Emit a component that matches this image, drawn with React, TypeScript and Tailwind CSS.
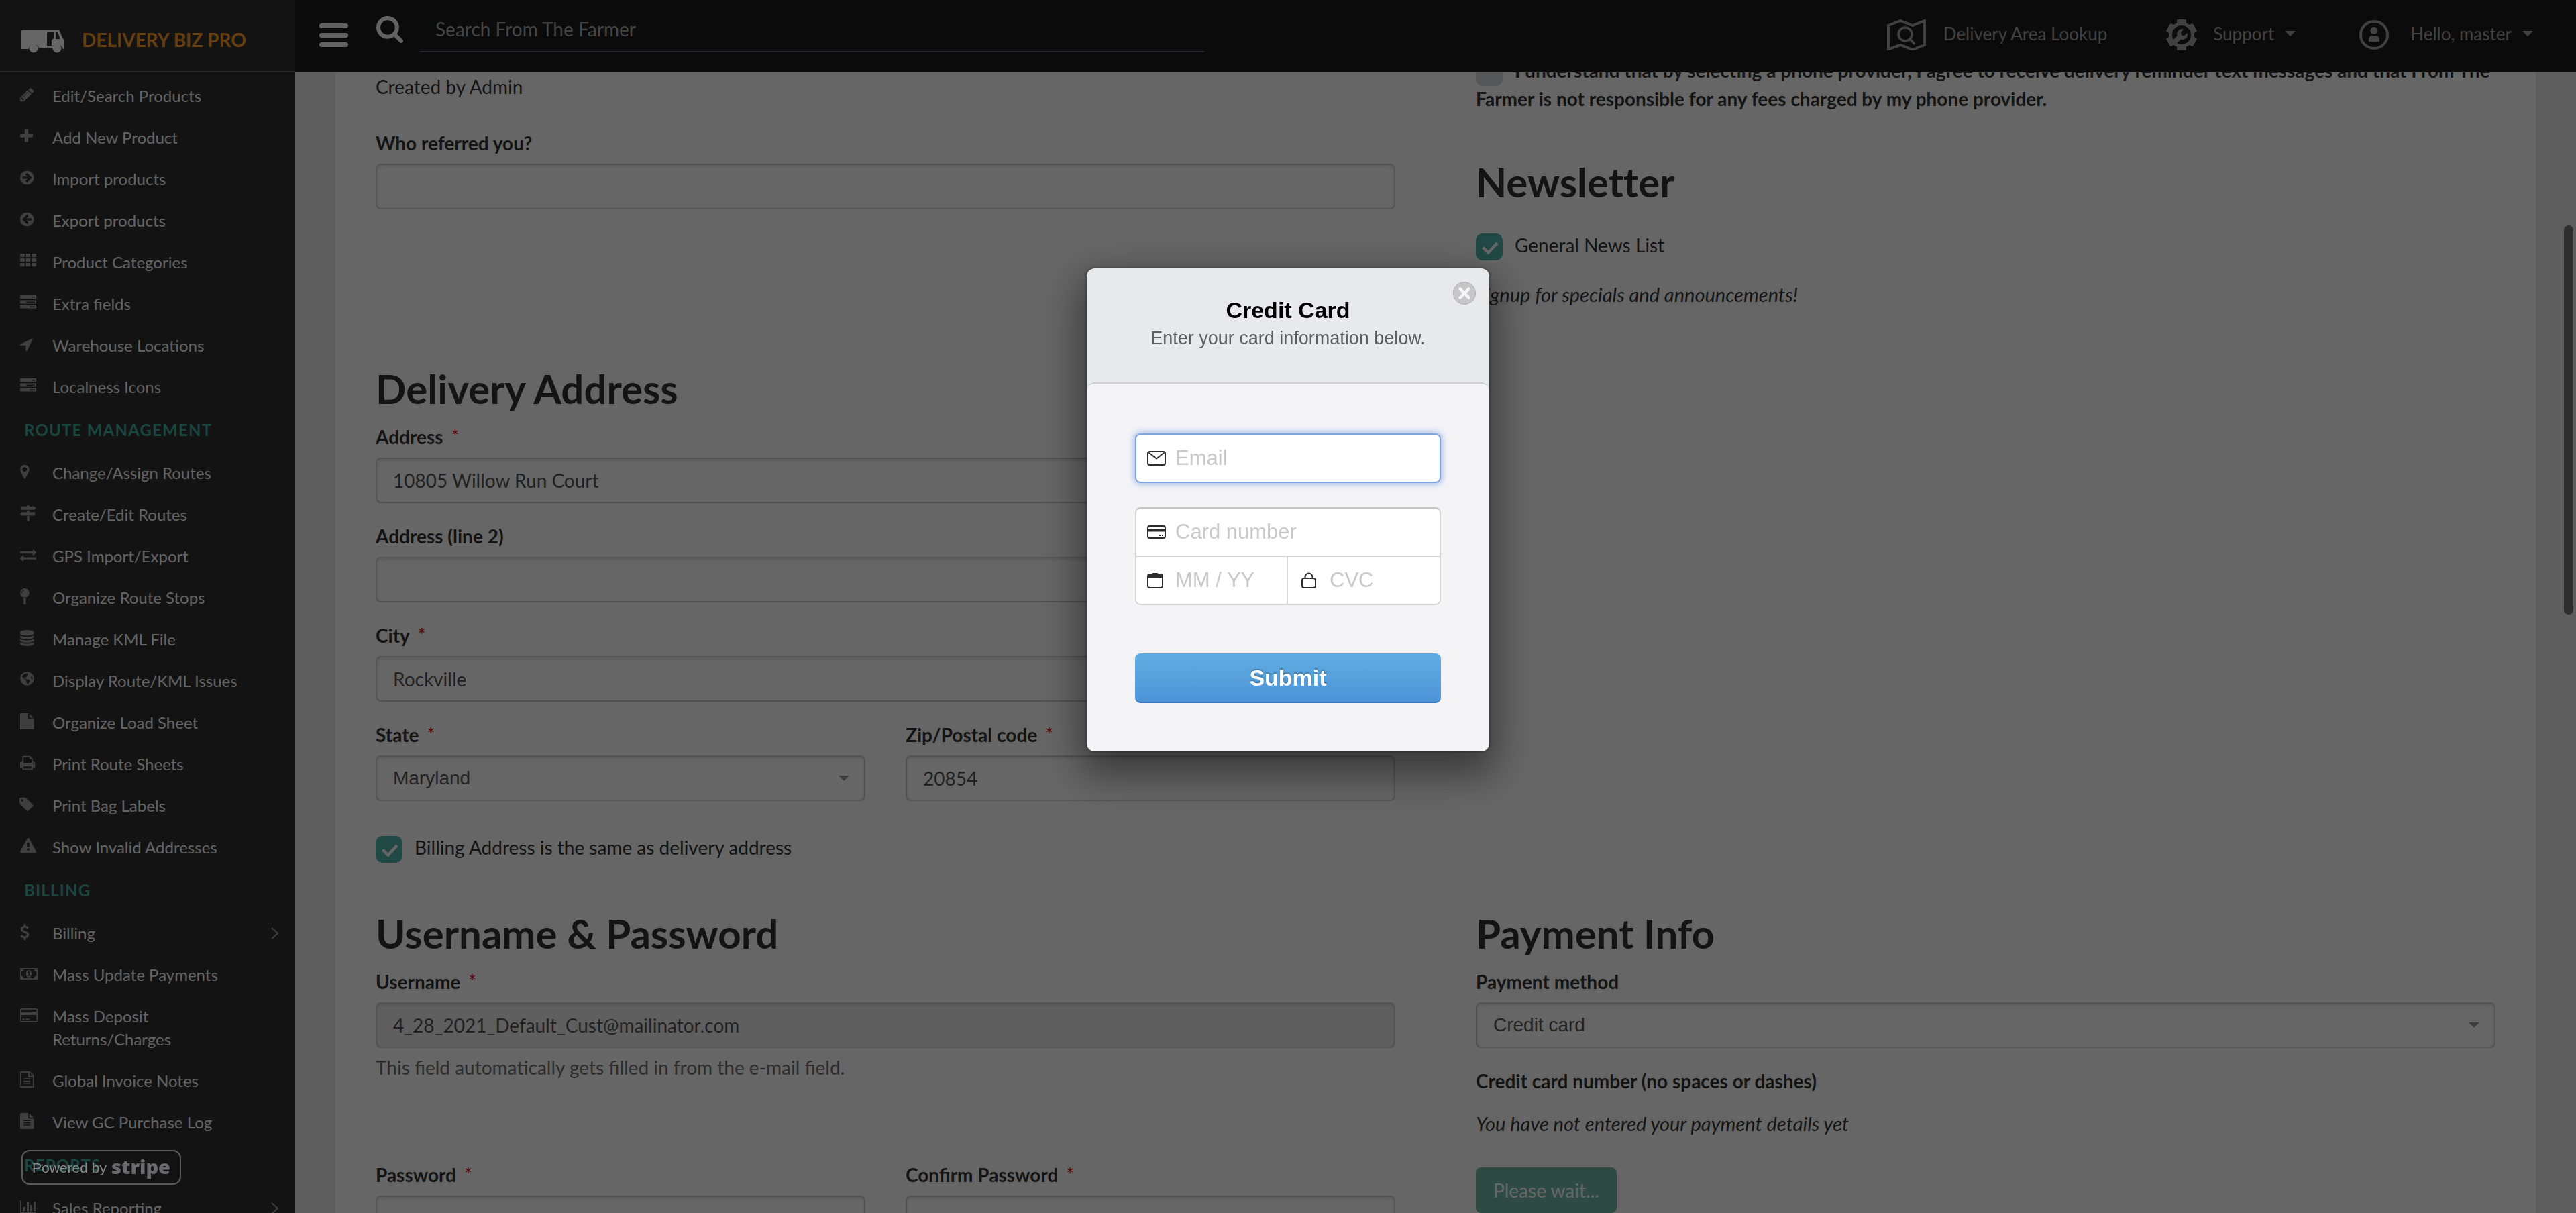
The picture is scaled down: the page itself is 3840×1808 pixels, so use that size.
import React from "react";
import { FaGlobeAmericas } from "react-icons/fa";

/* ---------- icons ---------- */

type GlyphProps = { d: string; x?: number };

function Glyph({ d, x = 0 }: GlyphProps) {
  return (
    <svg viewBox={`${x} 0 1792 1792`} className="size-6 overflow-visible" fill="currentColor" aria-hidden="true">
      <path fillRule="evenodd" d={d} />
    </svg>
  );
}

const arrowCircle =
  "M1413 896q0-27-18-45l-91-91-362-362q-18-18-45-18t-45 18l-91 91q-18 18-18 45t18 45l189 189h-502q-26 0-45 19t-19 45v128q0 26 19 45t45 19h502l-189 189q-19 19-19 45t19 45l91 91q18 18 45 18t45-18l362-362 91-91q18-18 18-45zm251 0q0 209-103 385.5t-279.5 279.5-385.5 103-385.5-103-279.5-279.5-103-385.5 103-385.5 279.5-279.5 385.5-103 385.5 103 279.5 279.5 103 385.5z";

const searchPath =
  "M1216 832q0-185-131.5-316.5t-316.5-131.5-316.5 131.5-131.5 316.5 131.5 316.5 316.5 131.5 316.5-131.5 131.5-316.5zm512 832q0 52-38 90t-90 38q-54 0-90-38l-343-342q-179 124-399 124-143 0-273.5-55.5t-225-150-150-225-55.5-273.5 55.5-273.5 150-225 225-150 273.5-55.5 273.5 55.5 225 150 150 225 55.5 273.5q0 220-124 399l343 343q37 37 37 90z";

function ServerIcon() {
  return (
    <svg viewBox="0 0 24 24" className="size-6" fill="currentColor" aria-hidden="true">
      <path
        fillRule="evenodd"
        d="M0 1h24v5H0zM18 3v1.5h4V3zM0 8.500h24v5H0zM9 10.500V12h13v-1.500zM0 15.500h24v5H0zM14 17.500V19h8v-1.500z"
      />
    </svg>
  );
}

function GridIcon() {
  const cells = [0, 8.6, 17.2];
  return (
    <svg viewBox="0 0 24 24" className="size-6" fill="currentColor" aria-hidden="true">
      {cells.map((x) =>
        [1, 8, 15].map((y) => <rect key={`${x}-${y}`} x={x} y={y} width="6.8" height="5.200" rx="1.200" />),
      )}
    </svg>
  );
}

function MoneyIcon() {
  return (
    <svg viewBox="0 0 26 24" className="h-6 w-[26px]" fill="currentColor" aria-hidden="true">
      <path
        fillRule="evenodd"
        d="M0 4h26v17H0zM5.200 5.700A3.500 3.500 0 0 1 1.700 9.200v6.600a3.500 3.500 0 0 1 3.500 3.500h15.600a3.500 3.500 0 0 1 3.500-3.500V9.200a3.500 3.500 0 0 1-3.500-3.500zM13 7.200c2.500 0 4.100 2.200 4.100 5.300s-1.600 5.300-4.100 5.300-4.100-2.200-4.100-5.300S10.500 7.200 13 7.200zM12.600 9l-2 1.700.8 1 1-.8v3.500h-1.600v1.300h4.600v-1.300h-1.300V9z"
      />
    </svg>
  );
}

function CardIcon() {
  return (
    <svg viewBox="0 0 26 24" className="h-6 w-[26px]" aria-hidden="true">
      <rect x="0.900" y="2.900" width="24.200" height="19" rx="2" fill="none" stroke="currentColor" strokeWidth="1.700" />
      <path fill="currentColor" d="M1 7h24v5H1zM3.500 17.600H7V19H3.500zM8.500 17.600h5V19h-5z" />
    </svg>
  );
}

function ChartIcon() {
  return (
    <svg viewBox="0 0 24 24" className="size-6" fill="currentColor" aria-hidden="true">
      <path d="M0 2h1.800v18H24v1.800H0zM5 12h3v6.500H5zM10 5h3v13.500h-3zM15 9h3v9.500h-3zM20 4h3.500v14.500H20z" />
    </svg>
  );
}

function TruckIcon() {
  return (
    <svg viewBox="0 0 64 36" className="h-9 w-16" aria-hidden="true">
      <path
        fillRule="evenodd"
        fill="#fff"
        d="M2 1h54l5 12 3 4v13h-2a8 8 0 0 0-15.200-1.500H26A8 8 0 0 0 10.400 30H0V3a2 2 0 0 1 2-2zM40 5a2 2 0 0 0-2 2v18h7V17l4-4V5zM51 5v10h7l-4-10z"
      />
      <circle cx="18" cy="29" r="6.500" fill="#fff" />
      <circle cx="53" cy="29" r="6.500" fill="#fff" />
    </svg>
  );
}

function MapSearchIcon() {
  return (
    <svg viewBox="0 0 58 46" className="h-[46px] w-[58px]" fill="none" stroke="currentColor" aria-hidden="true">
      <path strokeWidth="4" d="M2 9L20 2l18 7 18-7v36l-18 7-18-7-18 6.500z" />
      <circle cx="27" cy="22" r="10" strokeWidth="3.500" />
      <path strokeWidth="4" strokeLinecap="round" d="M34 29l6 6.500" />
    </svg>
  );
}

function GearWrenchIcon() {
  return (
    <svg viewBox="0 0 46 46" className="size-[46px]" aria-hidden="true">
      <g fill="currentColor">
        <circle cx="23" cy="23" r="19" />
        {[0, 60, 120].map((a) => (
          <rect key={a} x="16" y="0" width="14" height="46" rx="1.500" transform={`rotate(${a} 23 23)`} />
        ))}
      </g>
      <circle cx="23" cy="23" r="14" fill="#1e1e1e" />
      <path
        fill="currentColor"
        d="M26 14.500a7.500 7.500 0 0 0-9.300 9.800L10 31a14 14 0 0 0 5 5l7-6.200a7.500 7.500 0 0 0 9.300-9.800l-4.300 4.300-4-1-1-4z"
      />
    </svg>
  );
}

function UserIcon() {
  return (
    <svg viewBox="0 0 44 44" className="size-11" aria-hidden="true">
      <circle cx="22" cy="22" r="20" fill="none" stroke="currentColor" strokeWidth="4" />
      <circle cx="22" cy="15.500" r="5.500" fill="currentColor" />
      <path fill="currentColor" d="M14 32v-3c0-4 3-6 5-6h6c2 0 5 2 5 6v3z" />
    </svg>
  );
}

function Caret() {
  return (
    <svg viewBox="0 0 16 8" className="h-2 w-4" fill="currentColor" aria-hidden="true">
      <path d="M0 0h16L8 8z" />
    </svg>
  );
}

/* ---------- sidebar ---------- */

type Item = { label: React.ReactNode; icon: React.ReactNode; more?: boolean };

const products: Item[] = [
  {
    label: "Edit/Search Products",
    icon: (
      <Glyph
        x={128}
        d="M491 1536l91-91-235-235-91 91v107h128v128h107zm523-928q0-22-22-22-10 0-17 7l-542 542q-7 7-7 17 0 22 22 22 10 0 17-7l542-542q7-7 7-17zm-54-192l416 416-832 832h-416v-416zm683 96q0 53-37 90l-166 166-416-416 166-165q36-38 90-38 53 0 91 38l235 234q37 39 37 91z"
      />
    ),
  },
  {
    label: "Add New Product",
    icon: (
      <Glyph
        x={192}
        d="M1600 736v192q0 40-28 68t-68 28h-416v416q0 40-28 68t-68 28h-192q-40 0-68-28t-28-68v-416h-416q-40 0-68-28t-28-68v-192q0-40 28-68t68-28h416v-416q0-40 28-68t68-28h192q40 0 68 28t28 68v416h416q40 0 68 28t28 68z"
      />
    ),
  },
  { label: "Import products", icon: <Glyph x={128} d={arrowCircle} /> },
  {
    label: "Export products",
    icon: (
      <svg viewBox="128 0 1792 1792" className="size-6 overflow-visible" fill="currentColor" aria-hidden="true">
        <path fillRule="evenodd" d={arrowCircle} transform="matrix(-1 0 0 1 1792 0)" />
      </svg>
    ),
  },
  { label: "Product Categories", icon: <GridIcon /> },
  { label: "Extra fields", icon: <ServerIcon /> },
  {
    label: "Warehouse Locations",
    icon: (
      <Glyph
        x={192}
        d="M1593 349l-640 1280q-17 35-57 35-5 0-15-2-22-5-35.500-22.500t-13.500-39.500v-576h-576q-22 0-39.500-13.500t-22.500-35.500 4-42 29-30l1280-640q13-7 29-7 27 0 45 19 15 14 18.500 34.500t-6.500 39.500z"
      />
    ),
  },
  { label: "Localness Icons", icon: <ServerIcon /> },
];

const routes: Item[] = [
  {
    label: "Change/Assign Routes",
    icon: (
      <Glyph
        x={384}
        d="M1152 640q0-106-75-181t-181-75-181 75-75 181 75 181 181 75 181-75 75-181zm256 0q0 109-33 179l-364 774q-16 33-47.500 52t-67.500 19-67.500-19-46.500-52l-365-774q-33-70-33-179 0-212 150-362t362-150 362 150 150 362z"
      />
    ),
  },
  {
    label: "Create/Edit Routes",
    icon: (
      <Glyph d="M1745 297q10 10 10 23t-10 23l-141 141q-28 28-68 28h-1344q-26 0-45-19t-19-45v-256q0-26 19-45t45-19h576v-64q0-26 19-45t45-19h128q26 0 45 19t19 45v64h512q40 0 68 28zm-977 919h256v512q0 26-19 45t-45 19h-128q-26 0-45-19t-19-45v-512zm832-448q26 0 45 19t19 45v256q0 26-19 45t-45 19h-1344q-40 0-68-28l-141-141q-10-10-10-23t10-23l141-141q28-28 68-28h512v-192h256v192h576z" />
    ),
  },
  {
    label: "GPS Import/Export",
    icon: (
      <Glyph d="M1792 1184v192q0 13-9.500 22.500t-22.500 9.500h-1376v192q0 13-9.500 22.500t-22.500 9.500q-12 0-24-10l-319-320q-9-9-9-22 0-14 9-23l320-320q9-9 23-9 13 0 22.500 9.500t9.500 22.500v192h1376q13 0 22.500 9.500t9.500 22.500zm0-544q0 14-9 23l-320 320q-9 9-23 9-13 0-22.500-9.500t-9.500-22.500v-192h-1376q-13 0-22.500-9.500t-9.500-22.500v-192q0-13 9.500-22.500t22.500-9.500h1376v-192q0-14 9-23t23-9q12 0 24 10l319 319q9 9 9 23z" />
    ),
  },
  {
    label: "Organize Route Stops",
    icon: (
      <Glyph
        x={384}
        d="M896 1088q66 0 128-15v655q0 26-19 45t-45 19h-128q-26 0-45-19t-19-45v-655q61 15 128 15zm0-1088q212 0 362 150t150 362-150 362-362 150-362-150-150-362 150-362 362-150zm0 224q14 0 23-9t9-23-9-23-23-9q-146 0-249 103t-103 249q0 14 9 23t23 9 23-9 9-23q0-119 84.500-203.500t203.500-84.500z"
      />
    ),
  },
  {
    label: "Manage KML File",
    icon: (
      <Glyph
        x={128}
        d="M896 768q237 0 443-43t325-127v170q0 69-103 128t-280 93.500-385 34.500-385-34.500-280-93.500-103-128v-170q119 84 325 127t443 43zm0 768q237 0 443-43t325-127v170q0 69-103 128t-280 93.500-385 34.500-385-34.500-280-93.500-103-128v-170q119 84 325 127t443 43zm0-384q237 0 443-43t325-127v170q0 69-103 128t-280 93.500-385 34.500-385-34.500-280-93.500-103-128v-170q119 84 325 127t443 43zm0-1152q208 0 385 34.500t280 93.500 103 128v128q0 69-103 128t-280 93.500-385 34.500-385-34.500-280-93.500-103-128v-128q0-69 103-128t280-93.500 385-34.500z"
      />
    ),
  },
  { label: "Display Route/KML Issues", icon: <FaGlobeAmericas className="size-[21px]" aria-hidden="true" /> },
  {
    label: "Organize Load Sheet",
    icon: (
      <Glyph
        x={128}
        d="M1152 512v-472q22 14 36 28l408 408q14 14 28 36h-472zm-128 32q0 40 28 68t68 28h544v1056q0 40-28 68t-68 28h-1344q-40 0-68-28t-28-68v-1600q0-40 28-68t68-28h800v544z"
      />
    ),
  },
  {
    label: "Print Route Sheets",
    icon: (
      <Glyph
        x={64}
        d="M448 1536h896v-256h-896v256zm0-640h896v-384h-160q-40 0-68-28t-28-68v-160h-640v640zm1152 64q0-26-19-45t-45-19-45 19-19 45 19 45 45 19 45-19 19-45zm128 0v416q0 13-9.500 22.500t-22.500 9.500h-224v160q0 40-28 68t-68 28h-960q-40 0-68-28t-28-68v-160h-224q-13 0-22.500-9.500t-9.500-22.500v-416q0-79 56.500-135.500t135.500-56.500h64v-544q0-40 28-68t68-28h672q40 0 88 20t76 48l152 152q28 28 48 76t20 88v256h64q79 0 135.500 56.500t56.500 135.500z"
      />
    ),
  },
  {
    label: "Print Bag Labels",
    icon: (
      <Glyph
        x={192}
        d="M576 448q0-53-37.500-90.500t-90.500-37.500-90.500 37.500-37.500 90.500 37.500 90.500 90.500 37.500 90.500-37.500 37.500-90.500zm1067 576q0 53-37 90l-491 492q-39 37-91 37-53 0-90-37l-715-716q-38-37-64.500-101t-26.500-117v-416q0-52 38-90t90-38h416q53 0 117 26.500t102 64.500l715 714q37 39 37 91z"
      />
    ),
  },
  {
    label: "Show Invalid Addresses",
    icon: (
      <Glyph d="M1024 1375v-190q0-14-9.500-23.500t-22.500-9.500h-192q-13 0-22.500 9.500t-9.500 23.500v190q0 14 9.500 23.500t22.500 9.500h192q13 0 22.500-9.500t9.500-23.500zm-2-374l18-459q0-12-10-19-13-11-24-11h-220q-11 0-24 11-10 7-10 21l17 457q0 10 10 16.500t24 6.500h185q14 0 23.500-6.500t10.500-16.500zm-14-934l768 1408q35 63-2 126-17 29-46.500 46t-63.500 17h-1536q-34 0-63.500-17t-46.500-46q-37-63-2-126l768-1408q17-31 47-49t65-18 65 18 47 49z" />
    ),
  },
];

const billing: Item[] = [
  {
    label: "Billing",
    more: true,
    icon: (
      <Glyph
        x={380}
        d="M1362 1185q0 153-99.500 263.500t-258.500 136.500v175q0 14-9 23t-23 9h-135q-13 0-22.500-9.500t-9.500-22.500v-175q-66-9-127.500-31t-101.500-44.500-74-48-46.500-37.500-17.500-18q-17-21-2-41l103-135q7-10 23-12 15-2 24 9l2 2q113 99 243 125 37 8 74 8 81 0 142.500-43t61.500-122q0-28-15-53t-33.500-42-58.500-37.500-66-32-80-32.500q-39-16-61.500-25t-61.500-26.500-62.500-31-56.500-35.500-53.500-42.500-43.500-49-35.500-58-21-66.500-8.500-78q0-138 98-242t255-134v-180q0-13 9.500-22.500t22.500-9.500h135q14 0 23 9t9 23v176q57 6 110.500 23t87 33.500 63.500 37.500 39 29 15 14q17 18 5 38l-81 146q-8 15-23 16-14 3-27-7-3-3-14.500-12t-39-26.500-58.500-32-74.500-26-85.500-11.500q-95 0-155 43t-60 111q0 26 8.500 48t29.500 41.500 39.500 33 56 31 60.500 27 70 27.500q53 20 81 31.500t76 35 75.500 42.500 62 50 53 63.500 31.500 76.500 13 94z"
      />
    ),
  },
  { label: "Mass Update Payments", icon: <MoneyIcon /> },
  {
    label: (
      <>
        Mass Deposit
        <br />
        Returns/Charges
      </>
    ),
    icon: <CardIcon />,
  },
  {
    label: "Global Invoice Notes",
    icon: (
      <Glyph
        x={128}
        d="M1596 380q28 28 48 76t20 88v1152q0 40-28 68t-68 28h-1344q-40 0-68-28t-28-68v-1600q0-40 28-68t68-28h896q40 0 88 20t76 48zm-444-244v376h376q-10-29-22-41l-313-313q-12-12-41-22zm384 1528v-1024h-416q-40 0-68-28t-28-68v-416h-768v1536h1280zm-1024-864q0-14 9-23t23-9h704q14 0 23 9t9 23v64q0 14-9 23t-23 9h-704q-14 0-23-9t-9-23v-64zm736 224q14 0 23 9t9 23v64q0 14-9 23t-23 9h-704q-14 0-23-9t-9-23v-64q0-14 9-23t23-9h704zm0 256q14 0 23 9t9 23v64q0 14-9 23t-23 9h-704q-14 0-23-9t-9-23v-64q0-14 9-23t23-9h704z"
      />
    ),
  },
  {
    label: "View GC Purchase Log",
    icon: (
      <Glyph
        x={128}
        d="M1596 476q14 14 28 36h-472v-472q22 14 36 28zm-476 164h544v1056q0 40-28 68t-68 28h-1344q-40 0-68-28t-28-68v-1600q0-40 28-68t68-28h800v544q0 40 28 68t68 28zm160 736v-64q0-14-9-23t-23-9h-704q-14 0-23 9t-9 23v64q0 14 9 23t23 9h704q14 0 23-9t9-23zm0-256v-64q0-14-9-23t-23-9h-704q-14 0-23 9t-9 23v64q0 14 9 23t23 9h704q14 0 23-9t9-23zm0-256v-64q0-14-9-23t-23-9h-704q-14 0-23 9t-9 23v64q0 14 9 23t23 9h704q14 0 23-9t9-23z"
      />
    ),
  },
];

const reports: Item[] = [{ label: "Sales Reporting", more: true, icon: <ChartIcon /> }];

function NavList({ items }: { items: Item[] }) {
  return (
    <ul>
      {items.map((item, i) => (
        <li key={i}>
          <a href="#" className="flex items-start py-3.5 pr-6 pl-[30px] text-2xl/[34px] text-[#f8f8f8]">
            <span className="mt-[3px] w-12 shrink-0 text-[#9e9e9e]">{item.icon}</span>
            <span className="grow">{item.label}</span>
            {item.more && (
              <svg
                viewBox="0 0 12 18"
                className="mt-2 h-[18px] w-3 text-[#9e9e9e]"
                fill="none"
                stroke="currentColor"
                strokeWidth="2"
                aria-hidden="true"
              >
                <path d="M1 1l9 8-9 8" />
              </svg>
            )}
          </a>
        </li>
      ))}
    </ul>
  );
}

function NavHeading({ children }: { children: React.ReactNode }) {
  return <h2 className="px-9 py-4 text-2xl/[34px] font-bold tracking-wider text-[#41afa0]">{children}</h2>;
}

function Sidebar() {
  return (
    <aside className="flex w-[440px] shrink-0 flex-col overflow-hidden bg-[#303034]">
      <a href="#" className="flex h-[108px] shrink-0 items-center gap-[26px] border-b-2 border-[#68686c] px-8 pt-4">
        <TruckIcon />
        <span className="pb-1 text-[28px] leading-8 font-bold text-[#ff9f2a]">DELIVERY BIZ PRO</span>
      </a>
      <nav className="pt-1">
        <NavList items={products} />
        <NavHeading>ROUTE MANAGEMENT</NavHeading>
        <NavList items={routes} />
        <NavHeading>BILLING</NavHeading>
        <NavList items={billing} />
        <NavHeading>REPORTS</NavHeading>
        <NavList items={reports} />
      </nav>
    </aside>
  );
}

/* ---------- top bar ---------- */

function TopBar() {
  return (
    <header className="relative z-10 flex h-[108px] shrink-0 items-center bg-[#1c1c1c] pr-16 pl-9 text-[#a4a4a4]">
      <button type="button" aria-label="Toggle menu" className="mb-1 flex flex-col gap-[7px]">
        <span className="h-[7px] w-[43px] rounded-sm bg-[#f4f4f4]" />
        <span className="h-[7px] w-[43px] rounded-sm bg-[#f4f4f4]" />
        <span className="h-[7px] w-[43px] rounded-sm bg-[#f4f4f4]" />
      </button>
      <label htmlFor="site-search" className="mb-5 ml-[42px]" aria-label="Search">
        <svg viewBox="64 128 1664 1664" className="size-10" fill="#f4f4f4" aria-hidden="true">
          <path d={searchPath} />
        </svg>
      </label>
      <input
        id="site-search"
        type="text"
        placeholder="Search From The Farmer"
        className="mb-5 ml-6 h-[68px] w-[1170px] border-b-2 border-[#5e5e66] bg-transparent px-6 text-[28px] placeholder:text-[#aaaaaa]"
      />
      <nav className="mb-1 ml-auto flex items-center text-[26px] leading-[34px]">
        <a href="#" className="flex items-center">
          <MapSearchIcon />
          <span className="mb-1 ml-[26px]">Delivery Area Lookup</span>
        </a>
        <button type="button" className="ml-[88px] flex items-center">
          <GearWrenchIcon />
          <span className="mb-1 ml-6">Support</span>
          <span className="mb-1 ml-4">
            <Caret />
          </span>
        </button>
        <button type="button" className="ml-[95px] flex items-center">
          <UserIcon />
          <span className="mb-1 ml-8">Hello, master</span>
          <span className="mb-1 ml-4">
            <Caret />
          </span>
        </button>
      </nav>
    </header>
  );
}

/* ---------- form ---------- */

type FieldProps = {
  id: string;
  label: string;
  value?: string;
  required?: boolean;
  disabled?: boolean;
  type?: string;
  options?: string[];
};

function Field({ id, label, value = "", required, disabled, type = "text", options }: FieldProps) {
  return (
    <div>
      <label htmlFor={id} className="mb-2.5 block font-bold">
        {label}
        {required && <span className="ml-3 font-normal text-[#e0140a]">*</span>}
      </label>
      {options ? (
        <div className="relative">
          <select
            id={id}
            defaultValue={value}
            className="h-[68px] w-full appearance-none rounded-lg border-2 border-[#cccccc] bg-white px-6 font-[Liberation_Sans,sans-serif] text-[28px] text-[#555555] inset-shadow-[0_2px_4px_rgba(0,0,0,0.12)]"
          >
            {options.map((o) => (
              <option key={o}>{o}</option>
            ))}
          </select>
          <span className="pointer-events-none absolute inset-y-0 right-6 flex items-center text-[#999999]">
            <Caret />
          </span>
        </div>
      ) : (
        <input
          id={id}
          type={type}
          defaultValue={value}
          disabled={disabled}
          className="h-[68px] w-full rounded-lg border-2 border-[#cccccc] bg-white px-6 text-[28px] text-[#555555] inset-shadow-[0_2px_4px_rgba(0,0,0,0.12)] disabled:bg-[#eeeeee]"
        />
      )}
    </div>
  );
}

type CheckProps = { id: string; children: React.ReactNode; checked?: boolean; className?: string };

function Check({ id, children, checked, className }: CheckProps) {
  return (
    <div className={className}>
      <span className="relative float-left mt-1 mr-[18px] -mb-2 size-10">
        <input
          id={id}
          type="checkbox"
          defaultChecked={checked}
          className="block size-10 appearance-none rounded-[10px] bg-[#d8dade] checked:bg-[#50b4aa]"
        />
        {checked && (
          <svg
            viewBox="0 0 40 40"
            className="pointer-events-none absolute inset-0 size-10"
            fill="none"
            stroke="#ffffff"
            strokeWidth="4.500"
            aria-hidden="true"
          >
            <path d="M10.500 20.500l8 8L32 14" />
          </svg>
        )}
      </span>
      <label htmlFor={id}>{children}</label>
    </div>
  );
}

function SectionTitle({ children }: { children: React.ReactNode }) {
  return (
    <h1 className="mb-[18px] text-[60px] leading-[66px] font-bold [font-variant-ligatures:none]">{children}</h1>
  );
}

function CustomerForm() {
  return (
    <main className="min-h-0 grow overflow-hidden bg-[#ebebeb] px-[60px] font-[Lato,sans-serif] text-[28px] leading-[42px] text-[#333333]">
      <form className="-mt-6 grid grid-cols-2 gap-x-[120px] bg-white px-[60px] pb-20">
        <section className="pt-6">
          <p className="mb-[42px]">Created by Admin</p>
          <Field id="referred" label="Who referred you?" />
          <div className="mt-[234px]">
            <SectionTitle>Delivery Address</SectionTitle>
            <div className="flex flex-col gap-7">
              <Field id="address" label="Address" value="10805 Willow Run Court" required />
              <Field id="address2" label="Address (line 2)" />
              <Field id="city" label="City" value="Rockville" required />
              <div className="grid grid-cols-2 gap-[60px]">
                <Field id="state" label="State" value="Maryland" options={["Maryland"]} required />
                <Field id="zip" label="Zip/Postal code" value="20854" required />
              </div>
            </div>
            <Check id="same-billing" checked className="mt-12 mb-[74px]">
              Billing Address is the same as delivery address
            </Check>
          </div>
        </section>

        <section>
          <Check id="sms-consent" className="mb-[70px] font-bold">
            I understand that by selecting a phone provider, I agree to receive delivery reminder text messages and that
            From The Farmer is not responsible for any fees charged by my phone provider.
          </Check>
          <SectionTitle>Newsletter</SectionTitle>
          <Check id="news" checked className="mt-10 mb-8">
            General News List
          </Check>
          <p className="text-[29px] italic">Signup for specials and announcements!</p>
        </section>

        <section>
          <SectionTitle>Username &amp; Password</SectionTitle>
          <Field id="username" label="Username" value="4_28_2021_Default_Cust@mailinator.com" required disabled />
          <p className="mt-2 mb-[118px] text-[#737373]">This field automatically gets filled in from the e-mail field.</p>
          <div className="grid grid-cols-2 gap-[60px]">
            <Field id="password" label="Password" type="password" required />
            <Field id="confirm" label="Confirm Password" type="password" required />
          </div>
        </section>

        <section>
          <SectionTitle>Payment Info</SectionTitle>
          <Field id="method" label="Payment method" value="Credit card" options={["Credit card"]} />
          <p className="mt-7 mb-[22px] font-bold">Credit card number (no spaces or dashes)</p>
          <p className="mb-11 text-[29px] italic">You have not entered your payment details yet</p>
          <button type="button" className="h-[68px] rounded-lg bg-[#73b9ac] px-[26px] text-white">
            Please wait...
          </button>
        </section>
      </form>
    </main>
  );
}

/* ---------- checkout dialog ---------- */

function MailIcon() {
  return (
    <svg viewBox="0 0 28 22" className="h-[22px] w-7" fill="none" stroke="#2b2b2b" strokeWidth="2" aria-hidden="true">
      <rect x="1" y="1" width="26" height="20" rx="3" />
      <path d="M2.500 2.500L14 11.500l11.500-9" />
    </svg>
  );
}

function PayCardIcon() {
  return (
    <svg viewBox="0 0 28 22" className="h-[22px] w-7" aria-hidden="true">
      <rect x="1" y="2" width="26" height="18" rx="3" fill="none" stroke="#2b2b2b" strokeWidth="2" />
      <path fill="#2b2b2b" d="M1 6.500h26v4H1zM18 15h2v2h-2zM22 15h2v2h-2z" />
    </svg>
  );
}

function CalendarIcon() {
  return (
    <svg viewBox="0 0 24 24" className="size-6" aria-hidden="true">
      <rect x="1" y="3" width="22" height="20" rx="3" fill="none" stroke="#2b2b2b" strokeWidth="2" />
      <path fill="#2b2b2b" d="M1 8V5a3 3 0 0 1 3-3h2v2h2V1h8v3h2V2h2a3 3 0 0 1 3 3v3z" />
    </svg>
  );
}

function LockIcon() {
  return (
    <svg viewBox="0 0 22 24" className="h-6 w-[22px]" fill="none" stroke="#2b2b2b" strokeWidth="2" aria-hidden="true">
      <rect x="1" y="9" width="20" height="14" rx="3" />
      <path d="M5.500 9V7a5.500 5.500 0 0 1 11 0v2" />
    </svg>
  );
}

type PayInputProps = { id: string; label: string; icon: React.ReactNode; className: string };

function PayInput({ id, label, icon, className }: PayInputProps) {
  return (
    <div className={className}>
      <label htmlFor={id} aria-label={label} className="flex w-[42px] shrink-0">
        {icon}
      </label>
      <input
        id={id}
        type="text"
        placeholder={label}
        className="h-[70px] w-full min-w-0 bg-transparent outline-none placeholder:text-[#c9c9cb]"
      />
    </div>
  );
}

function CheckoutDialog() {
  return (
    <div
      role="dialog"
      aria-labelledby="pay-title"
      className="relative w-[600px] rounded-xl bg-[#e8e9eb] font-[Liberation_Sans,sans-serif] text-[31px] shadow-[0_0_4px_rgba(0,0,0,0.5),0_24px_60px_10px_rgba(0,0,0,0.45)]"
    >
      <button type="button" aria-label="Close" className="absolute top-5 right-5">
        <svg viewBox="0 0 34 34" className="size-[34px]" aria-hidden="true">
          <circle cx="17" cy="17" r="16.500" fill="#c6c6c8" stroke="#b0b0b2" />
          <path d="M10.500 10.500l13 13m0-13l-13 13" stroke="#f6f6f7" strokeWidth="4.500" strokeLinecap="round" />
        </svg>
      </button>
      <div className="flex h-[170px] flex-col items-center pt-10 text-center">
        <h2 id="pay-title" className="text-[34px] leading-[44px] font-bold text-black">
          Credit Card
        </h2>
        <p className="text-[27px] leading-10 text-[#5c5d65]">Enter your card information below.</p>
      </div>
      <form className="rounded-xl border-t-2 border-[#cfcfd2] bg-[#f4f4f7] px-[72px] pt-[74px] pb-[72px]">
        <PayInput
          id="pay-email"
          label="Email"
          icon={<MailIcon />}
          className="flex items-center rounded-lg border-2 border-[#7fa5dc] bg-white px-4 shadow-[0_0_10px_2px_rgba(110,150,220,0.6)]"
        />
        <div className="mt-9 overflow-hidden rounded-lg border-2 border-[#d4d4d6] border-t-[#c4c4c6] bg-white">
          <PayInput
            id="pay-number"
            label="Card number"
            icon={<PayCardIcon />}
            className="flex items-center border-b-2 border-[#d8d8da] px-4"
          />
          <div className="grid grid-cols-2">
            <PayInput
              id="pay-exp"
              label="MM / YY"
              icon={<CalendarIcon />}
              className="flex items-center border-r-2 border-[#d8d8da] px-4"
            />
            <PayInput id="pay-cvc" label="CVC" icon={<LockIcon />} className="flex items-center pr-4 pl-5" />
          </div>
        </div>
        <button
          type="button"
          className="mt-[72px] block h-[74px] w-full rounded-lg border-b-2 border-[#3f7cc4] bg-linear-to-b from-[#61ade1] to-[#4d94d8] text-[34px] font-bold text-white [text-shadow:0_-2px_2px_rgba(0,0,0,0.25)]"
        >
          Submit
        </button>
      </form>
    </div>
  );
}

export default function App() {
  return (
    <div className="relative flex h-screen overflow-hidden font-[Lato,sans-serif]">
      <Sidebar />
      <div className="flex min-w-0 grow flex-col">
        <TopBar />
        <CustomerForm />
      </div>

      <div className="fixed inset-0 z-20 flex items-start justify-center bg-black/60 pt-[400px]">
        <CheckoutDialog />
      </div>

      <a
        href="#"
        className="fixed bottom-[42px] left-8 z-30 flex h-[52px] w-[238px] items-center justify-between rounded-xl border-2 border-[#5a5a5c] px-3.5 whitespace-nowrap text-[#8a8a8c]"
      >
        <span className="font-[Liberation_Sans,sans-serif] text-[21px] leading-none">Powered by</span>
        <span className="pb-1 font-[Open_Sans,sans-serif] text-[29px] leading-none font-extrabold text-[#6a6a6c]">
          stripe
        </span>
      </a>
      <div className="fixed top-[336px] right-1 z-30 h-[580px] w-3.5 rounded-full bg-[#2e2e2e]" />
    </div>
  );
}
